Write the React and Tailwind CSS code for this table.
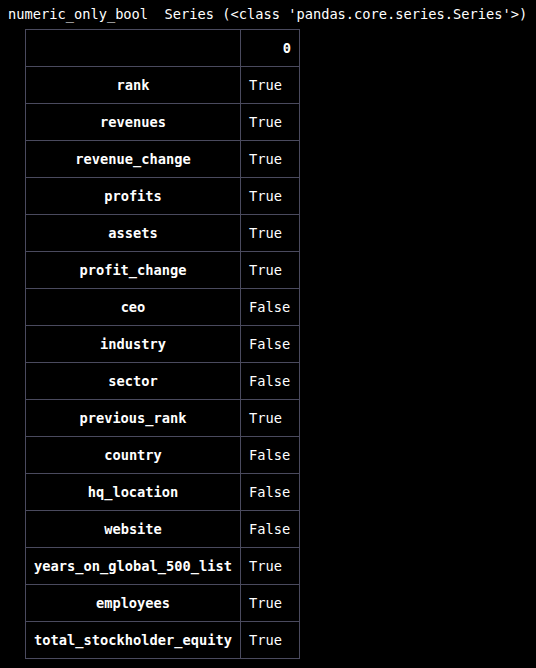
export default function App() {
  const rows = [
    ["rank", "True"],
    ["revenues", "True"],
    ["revenue_change", "True"],
    ["profits", "True"],
    ["assets", "True"],
    ["profit_change", "True"],
    ["ceo", "False"],
    ["industry", "False"],
    ["sector", "False"],
    ["previous_rank", "True"],
    ["country", "False"],
    ["hq_location", "False"],
    ["website", "False"],
    ["years_on_global_500_list", "True"],
    ["employees", "True"],
    ["total_stockholder_equity", "True"],
  ];
  const font = { fontFamily: '"DejaVu Sans Mono", "Liberation Mono", monospace' };
  return (
    <div className="bg-black w-[536px] h-[668px] text-white text-[13.7px] overflow-hidden" style={font}>
      <div className="pl-[8px] pt-[5px] h-[29px] leading-[18px] whitespace-pre">numeric_only_bool  Series (&lt;class 'pandas.core.series.Series'&gt;)</div>
      <table className="ml-[25px] border-collapse">
        <thead>
          <tr className="h-[37px]">
            <th className="border border-[#4a4a5e] w-[215px] p-0"></th>
            <th className="border border-[#4a4a5e] w-[59px] text-right pr-[8px] font-bold">0</th>
          </tr>
        </thead>
        <tbody>
          {rows.map(([k, v]) => (
            <tr key={k} className="h-[37px]">
              <th className="border border-[#4a4a5e] text-center font-bold p-0">{k}</th>
              <td className="border border-[#4a4a5e] text-left pl-[8px] p-0">{v}</td>
            </tr>
          ))}
        </tbody>
      </table>
    </div>
  );
}
